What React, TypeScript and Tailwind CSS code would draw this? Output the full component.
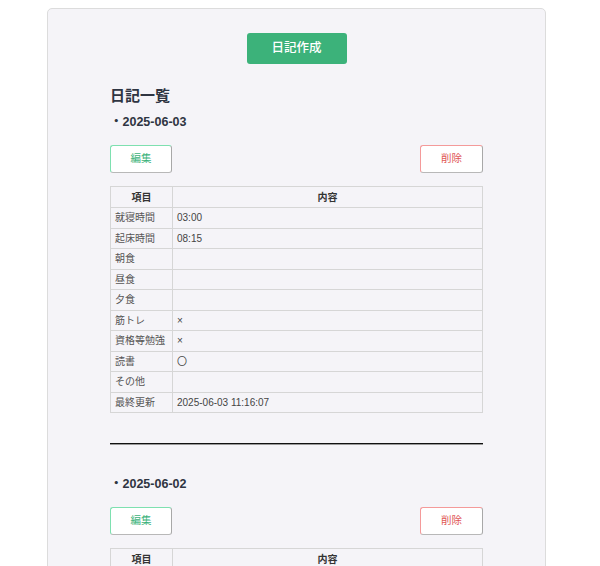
import React from "react";

const rows1: [string, string][] = [
  ["就寝時間", "03:00"],
  ["起床時間", "08:15"],
  ["朝食", ""],
  ["昼食", ""],
  ["夕食", ""],
  ["筋トレ", "×"],
  ["資格等勉強", "×"],
  ["読書", "〇"],
  ["その他", ""],
  ["最終更新", "2025-06-03 11:16:07"],
];

function Entry({ date, rows }: { date: string; rows: [string, string][] }) {
  return (
    <div className="flex flex-col">
      <div className="h-[24px] shrink-0 flex items-center text-[12.5px] font-bold text-[#2f3542]">・{date}</div>
      <div className="flex justify-between mt-[11px] shrink-0">
        <button className="w-[62px] h-[28px] bg-white border border-[#7ee0b0] border-r-[#a8a8a8] border-b-[#b8b8b8] rounded-[3px] text-[10.5px] text-[#3cb27a]">
          編集
        </button>
        <button className="w-[63px] h-[28px] bg-white border border-[#f49a9a] border-r-[#a8a8a8] border-b-[#b8b8b8] rounded-[3px] text-[10.5px] text-[#e05555]">
          削除
        </button>
      </div>
      <table className="mt-[13px] w-full border-collapse text-[10px] text-[#444]">
        <thead>
          <tr className="h-[21px]">
            <th className="w-[62px] border border-[#d6d6d6] font-bold text-[#333] text-center">項目</th>
            <th className="border border-[#d6d6d6] font-bold text-[#333] text-center">内容</th>
          </tr>
        </thead>
        <tbody>
          {rows.map(([k, v]) => (
            <tr key={k} className="h-[20.5px]">
              <td className="border border-[#d6d6d6] pl-[4px] text-[#555]">{k}</td>
              <td className="border border-[#d6d6d6] pl-[4px] text-[#444]">{v}</td>
            </tr>
          ))}
        </tbody>
      </table>
    </div>
  );
}

export default function App() {
  return (
    <div
      className="w-[600px] h-[566px] overflow-hidden bg-white"
      style={{ fontFamily: '"Liberation Sans", "Noto Sans CJK JP", sans-serif' }}
    >
      <div className="ml-[47px] mt-[8px] w-[499px] bg-[#f5f4f8] border border-[#dcdcdc] rounded-[5px] flex flex-col items-center pt-[24px] pb-[40px]">
        <button className="w-[100px] h-[31px] shrink-0 bg-[#3cb27a] rounded-[3px] text-white text-[12.5px] font-medium">
          日記作成
        </button>
        <div className="w-[373px] flex flex-col mt-[20px]">
          <div className="h-[24px] shrink-0 flex items-center text-[15px] font-bold text-[#2f3542]">日記一覧</div>
          <div className="mt-[2px]">
            <Entry date="2025-06-03" rows={rows1} />
          </div>
          <div className="mt-[30px] h-[2px] shrink-0 bg-[#111] border-b border-[#999]" />
          <div className="mt-[27px]">
            <Entry date="2025-06-02" rows={rows1} />
          </div>
        </div>
      </div>
    </div>
  );
}
